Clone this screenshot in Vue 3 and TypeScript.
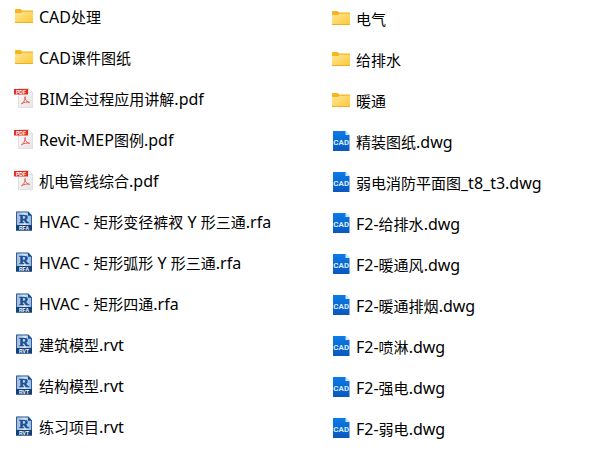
<script setup lang="ts">
type FileKind = 'folder' | 'pdf' | 'rfa' | 'rvt' | 'dwg'

interface FileEntry {
  name: string
  kind: FileKind
}

interface TextRun {
  text: string
  latin: boolean
}

const columns: FileEntry[][] = [
  [
    { name: 'CAD处理', kind: 'folder' },
    { name: 'CAD课件图纸', kind: 'folder' },
    { name: 'BIM全过程应用讲解.pdf', kind: 'pdf' },
    { name: 'Revit-MEP图例.pdf', kind: 'pdf' },
    { name: '机电管线综合.pdf', kind: 'pdf' },
    { name: 'HVAC - 矩形变径裤衩 Y 形三通.rfa', kind: 'rfa' },
    { name: 'HVAC - 矩形弧形 Y 形三通.rfa', kind: 'rfa' },
    { name: 'HVAC - 矩形四通.rfa', kind: 'rfa' },
    { name: '建筑模型.rvt', kind: 'rvt' },
    { name: '结构模型.rvt', kind: 'rvt' },
    { name: '练习项目.rvt', kind: 'rvt' },
  ],
  [
    { name: '电气', kind: 'folder' },
    { name: '给排水', kind: 'folder' },
    { name: '暖通', kind: 'folder' },
    { name: '精装图纸.dwg', kind: 'dwg' },
    { name: '弱电消防平面图_t8_t3.dwg', kind: 'dwg' },
    { name: 'F2-给排水.dwg', kind: 'dwg' },
    { name: 'F2-暖通风.dwg', kind: 'dwg' },
    { name: 'F2-暖通排烟.dwg', kind: 'dwg' },
    { name: 'F2-喷淋.dwg', kind: 'dwg' },
    { name: 'F2-强电.dwg', kind: 'dwg' },
    { name: 'F2-弱电.dwg', kind: 'dwg' },
  ],
]

// Latin and Chinese runs are set at slightly different sizes.
function textRuns(name: string): TextRun[] {
  const parts = name.match(/[\x20-\x7e]+|[^\x20-\x7e]+/g) ?? []
  return parts.map((text) => ({ text, latin: text.charCodeAt(0) < 0x7f }))
}
</script>

<template>
  <svg class="defs" aria-hidden="true">
    <defs>
      <linearGradient id="folder-fill" x1="0" y1="0" x2="1" y2="1">
        <stop offset="0" stop-color="#ffe69b" />
        <stop offset="1" stop-color="#ffc937" />
      </linearGradient>
      <linearGradient id="page-fill" x1="0" y1="0" x2="1" y2="1">
        <stop offset="0" stop-color="#fafafa" />
        <stop offset="1" stop-color="#e6e6e6" />
      </linearGradient>
      <linearGradient id="revit-fill" x1="0" y1="0" x2="1" y2="0">
        <stop offset="0" stop-color="#8fb0d6" />
        <stop offset="0.5" stop-color="#dce9f6" />
        <stop offset="1" stop-color="#8fb0d6" />
      </linearGradient>
      <linearGradient id="dwg-fill" x1="0" y1="0" x2="0" y2="1">
        <stop offset="0" stop-color="#0b7ce8" />
        <stop offset="1" stop-color="#0a58bd" />
      </linearGradient>
    </defs>
  </svg>
  <main class="files">
    <ul v-for="(column, index) in columns" :key="index" class="column">
      <li v-for="file in column" :key="file.name" class="file">
        <svg class="icon" viewBox="0 0 20 20" aria-hidden="true">
          <g v-if="file.kind === 'folder'">
            <path d="M1 4q0-1 1-1h4.6l1.4 1.6H19v3H1z" fill="#f5b51d" />
            <path d="M1 7h6l1.5-1.2H19V16H1z" fill="url(#folder-fill)" />
            <path d="M1 16h18v1H1z" fill="#eeae2c" />
          </g>
          <g v-else-if="file.kind === 'pdf'">
            <path d="M4.5.5h10l4 4v15h-14z" fill="url(#page-fill)" stroke="#d7d7d7" stroke-width=".7" />
            <path d="M14.5.5v4h4z" fill="#fff" stroke="#cfcfcf" stroke-width=".6" />
            <path d="M0 1h14v5.5H0z" fill="#e42b1d" />
            <text x="7" y="5.6" text-anchor="middle" class="pdf-label">PDF</text>
            <path
              d="M7.4 15.8c1.5-.8 4.2-3.7 3.7-7.2-.7.8.3 5.2 4.5 5.7-2.1-.7-6.5.2-8.2 1.5z"
              fill="none" stroke="#e6524a" stroke-width=".9" stroke-linejoin="round"
            />
          </g>
          <g v-else-if="file.kind === 'dwg'">
            <path d="M2 0h12.5L18.5 4V20H2z" fill="url(#dwg-fill)" />
            <path d="M14.5 0 18.5 4h-4z" fill="#d4e8ff" />
            <text x="10.2" y="14.2" text-anchor="middle" class="dwg-label">CAD</text>
          </g>
          <g v-else>
            <path d="M2 .6h12.5L18 4.5V19.5H2z" fill="url(#revit-fill)" />
            <path d="M2.5 14V1H14.3L17.5 4.5V14" fill="none" stroke="#315f9a" />
            <path d="M14 .6 18.2 4.8H14z" fill="#174f94" />
            <text x="10" y="11.6" text-anchor="middle" class="revit-letter">R</text>
            <path d="M2 14h16v5.7H2z" fill="#143f77" />
            <text x="10" y="18.9" text-anchor="middle" class="revit-label">{{ file.kind.toUpperCase() }}</text>
          </g>
        </svg>
        <span class="name"><span
          v-for="(run, position) in textRuns(file.name)"
          :key="position"
          :class="{ latin: run.latin }"
        >{{ run.text }}</span></span>
      </li>
    </ul>
  </main>
</template>

<style>
body {
  background: #fff;
}
</style>

<style scoped>
.defs {
  position: absolute;
  width: 0;
  height: 0;
}

.files {
  display: grid;
  grid-template-columns: 317fr 269fr;
  padding: 6px 0 12px 14px;
  color: #000;
  font-family: "Noto Sans", "Noto Sans CJK SC", sans-serif;
  font-size: 15px;
  line-height: 22px;
}

.column {
  display: flex;
  flex-direction: column;
  gap: 19px;
  margin: 0;
  padding: 0;
  list-style: none;
}

.column + .column {
  padding-top: 2px;
}

.file {
  display: flex;
  align-items: flex-start;
  gap: 5px;
  height: 22px;
}

.icon {
  flex: none;
  width: 20px;
  height: 20px;
}

.name {
  white-space: pre;
}

.latin {
  font-size: 16px;
  line-height: 20px;
}

.pdf-label {
  fill: #fff;
  font: bold 5px "Liberation Sans", sans-serif;
}

.dwg-label {
  fill: #d9ebff;
  font: bold 8px "Roboto", sans-serif;
}

.revit-letter {
  fill: #174f94;
  stroke: #174f94;
  stroke-width: 0.6px;
  font: bold 13px "Liberation Serif", serif;
}

.revit-label {
  fill: #fff;
  font: bold 5px "Liberation Sans", sans-serif;
}
</style>
